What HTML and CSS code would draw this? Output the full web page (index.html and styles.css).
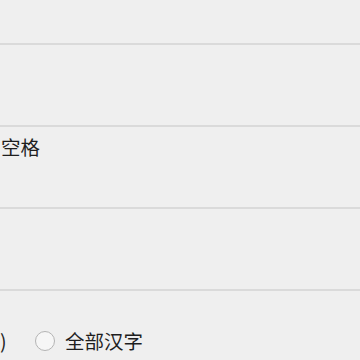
FILE: index.html
```html
<!DOCTYPE html>
<html lang="zh">
<head>
  <meta charset="UTF-8" />
  <meta name="viewport" content="width=device-width, initial-scale=1.0" />
  <title>设置</title>
  <link rel="stylesheet" href="styles.css">
</head>
<body>
  <div class="list">
    <div class="row row-top"></div>
    <div class="row"></div>
    <div class="row">
      <div class="label">空格</div>
    </div>
    <div class="row"></div>
    <div class="row row-last">
      <div class="options">
        <span class="tail">)</span>
        <label class="option">
          <span class="radio"></span>
          <span>全部汉字</span>
        </label>
      </div>
    </div>
  </div>
</body>
</html>
```

FILE: styles.css
```css
body {
  margin: 0;
  padding: 0;
  background-color: #efefef;
  font-family: "Noto Sans CJK SC", "Noto Sans", sans-serif;
  color: #1e1e1e;
}
.list {
  display: flex;
  flex-direction: column;
}
.row {
  height: 80px;
  border-bottom: 2px solid #dadada;
  box-sizing: content-box;
}
.row-top {
  height: 43px;
}
.label {
  font-size: 19.5px;
  line-height: 24px;
  padding-top: 8px;
  padding-left: 1px;
}
.row-last {
  border-bottom: none;
  height: auto;
}
.options {
  display: flex;
  align-items: center;
  padding-top: 38px;
  font-size: 19.5px;
  line-height: 24px;
}
.tail {
  width: 35px;
}
.option {
  display: flex;
  align-items: center;
  gap: 10px;
}
.radio {
  width: 18px;
  height: 18px;
  border: 1.5px solid #b4b4b4;
  border-radius: 50%;
  background: #f6f6f6;
}
```
